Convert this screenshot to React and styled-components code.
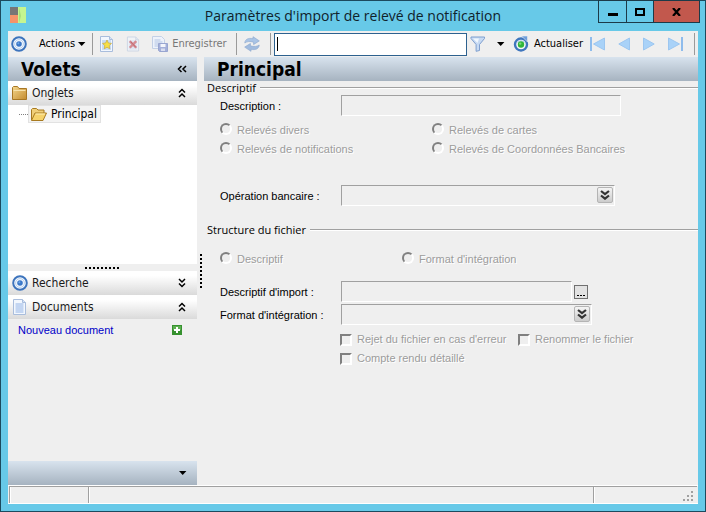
import React from "react";
import styled, { createGlobalStyle, css } from "styled-components";

const tahoma = `"DejaVu Sans Condensed", "DejaVu Sans", sans-serif`;
const segoe = `"Open Sans", "Noto Sans", sans-serif`;
const sans = `"Liberation Sans", Arial, sans-serif`;

const GlobalStyle = createGlobalStyle`
  *, *::before, *::after { box-sizing: border-box; }
  body { margin: 0; background: #67c9e8; }
  button, input, select { font: inherit; color: inherit; margin: 0; padding: 0; border-radius: 0; }
  button { background: none; border: 0; }
  svg { display: block; flex: none; }
`;

const Window = styled.div`
  min-height: 100vh;
  display: flex;
  flex-direction: column;
  padding: 0 7px 7px;
  border: 1px solid #1c4a5e;
  background: #67c9e8;
  font-family: ${sans};
  font-size: 11px;
  color: #000;
`;

const TitleBar = styled.header`
  position: relative;
  flex: none;
  height: 30px;
`;

const Logo = styled.svg`
  position: absolute;
  left: 2px;
  top: 6px;
`;

const Title = styled.h1`
  margin: 0;
  font: 400 14px/30px ${segoe};
  text-align: center;
  color: #10222b;
`;

const WindowButtons = styled.div`
  position: absolute;
  top: -1px;
  right: -2px;
  display: flex;
  border: 1px solid #1c3a48;
`;

const WindowButton = styled.button`
  width: ${(p) => p.$width}px;
  height: 21px;
  display: flex;
  align-items: center;
  justify-content: center;
  background: ${(p) => (p.$close ? "#c2584d" : "transparent")};
  & + & { border-left: 1px solid #1c3a48; }
`;

const Toolbar = styled.div`
  flex: none;
  height: 26px;
  display: flex;
  align-items: center;
  background: #efefef;
  font: 11px/16px ${tahoma};
`;

const ToolButton = styled.button`
  height: 24px;
  flex: none;
  display: flex;
  align-items: center;
  gap: ${(p) => p.$gap || 4}px;
  padding: 0 ${(p) => p.$pad ?? 4}px;
  color: ${(p) => (p.disabled ? "#777" : "#000")};
  white-space: nowrap;
`;

const Separator = styled.span`
  flex: none;
  width: 1px;
  height: 22px;
  margin: 0 ${(p) => p.$after ?? 4}px 0 ${(p) => p.$before ?? 4}px;
  background: #9a9a9a;
`;

const Search = styled.div`
  position: relative;
  flex: 1 1 195px;
  min-width: 80px;
  height: 23px;
  &::after {
    content: "";
    position: absolute;
    left: 3px;
    top: 4px;
    width: 1px;
    height: 14px;
    background: #000;
  }
`;

const SearchInput = styled.input`
  display: block;
  width: 100%;
  height: 100%;
  padding: 0 4px;
  border: 1px solid #2d618f;
  background: #fff;
  outline: none;
`;

const Body = styled.div`
  flex: 1;
  display: flex;
  background: #efefef;
`;

const Sidebar = styled.aside`
  flex: none;
  width: 189px;
  display: flex;
  flex-direction: column;
`;

const gradientBar = css`
  flex: none;
  height: 24px;
  background: linear-gradient(#d8e3ee, #a6b3c0);
`;

const Heading = styled.div`
  ${gradientBar}
  display: flex;
  align-items: center;
  justify-content: space-between;
  padding: 0 10px 0 13px;
`;

const HeadingText = styled.h2`
  margin: 0;
  font: 700 19px/24px ${tahoma};
`;

const Section = styled.button`
  flex: none;
  width: 100%;
  height: 24px;
  display: flex;
  align-items: center;
  gap: 4px;
  padding: 0 10px 0 4px;
  background: linear-gradient(#fff 20%, #dadada);
  font: 12px/22px ${tahoma};
  color: #1a1a1a;
`;

const SectionIcon = styled.span`
  width: 16px;
  flex: none;
`;

const SectionLabel = styled.span`
  flex: 1;
  text-align: left;
`;

const Tree = styled.div`
  height: 159px;
  padding-left: 11px;
  background: #fff;
`;

const TreeItem = styled.div`
  display: flex;
  align-items: center;
  &::before {
    content: "";
    width: 9px;
    border-top: 1px dotted #808080;
  }
`;

const TreeButton = styled.button`
  height: 18px;
  display: flex;
  align-items: center;
  gap: 4px;
  padding: 0 3px 0 2px;
  border: 1px solid #e2e2e2;
  background: #f3f3f3;
  font: 12px/16px ${tahoma};
`;

const HorizontalGrip = styled.div`
  height: 7px;
  display: flex;
  align-items: center;
  justify-content: center;
  &::before {
    content: "";
    width: 35px;
    height: 2px;
    background: repeating-linear-gradient(90deg, #000 0 2px, transparent 2px 4px);
  }
`;

const VerticalGrip = styled.div`
  flex: none;
  width: 7px;
  display: flex;
  align-items: center;
  justify-content: center;
  &::before {
    content: "";
    width: 2px;
    height: 34px;
    background: repeating-linear-gradient(#000 0 2px, transparent 2px 4px);
  }
`;

const DocumentRow = styled.div`
  flex: 1;
  display: flex;
  align-items: flex-start;
  justify-content: space-between;
  padding: 4px 15px 0 10px;
  line-height: 15px;
`;

const DocumentLink = styled.a`
  color: #0000c8;
  text-decoration: none;
`;

const AddButton = styled.button`
  margin-top: 2px;
`;

const SidebarFooter = styled.div`
  ${gradientBar}
  display: flex;
  align-items: center;
  justify-content: flex-end;
  padding-right: 10px;
`;

const Main = styled.main`
  flex: 1;
  min-width: 0;
`;

const Group = styled.fieldset`
  margin: 0;
  padding: 0;
  border: 0;
  min-width: 0;
`;

const GroupLegend = styled.legend`
  width: 100%;
  display: flex;
  align-items: center;
  gap: 4px;
  padding: 0 0 0 3px;
  font: 11px/14px ${segoe};
  &::after {
    content: "";
    flex: 1;
    height: 2px;
    background: #a0a0a0;
    border-bottom: 1px solid #fff;
  }
`;

const Field = styled.div`
  display: grid;
  grid-template-columns: 121px minmax(0, 1fr);
  align-items: center;
  padding-left: 16px;
  margin-top: ${(p) => p.$top || 0}px;
`;

const FieldLabel = styled.label`
  white-space: nowrap;
`;

const FieldControl = styled.div`
  display: flex;
  align-items: center;
  gap: 2px;
`;

const sunken = css`
  height: 21px;
  border: 1px solid;
  border-color: #a0a0a0 #fff #fff #a0a0a0;
  background: #efefef;
`;

const TextInput = styled.input`
  ${sunken}
  width: ${(p) => p.$width}px;
  max-width: 100%;
`;

const Combo = styled.div`
  position: relative;
  width: ${(p) => p.$width}px;
  max-width: 100%;
`;

const ComboSelect = styled.select`
  ${sunken}
  display: block;
  width: 100%;
  appearance: none;
  opacity: 1;
`;

const ComboArrow = styled.span`
  position: absolute;
  right: 2px;
  top: 2px;
  width: 16px;
  height: 16px;
  display: flex;
  align-items: center;
  justify-content: center;
  border: 1px solid #b4b4b4;
  border-radius: 2px;
  background: linear-gradient(#f4f4f4, #cccccc);
`;

const BrowseButton = styled.button`
  width: 14px;
  height: 14px;
  display: flex;
  align-items: flex-end;
  justify-content: center;
  padding-bottom: 2px;
  border: 1px solid #707070;
  background: #e2e2e2;
`;

const OptionGrid = styled.div`
  display: grid;
  grid-template-columns: ${(p) => p.$first}px minmax(0, 1fr);
  row-gap: 4px;
  margin-top: ${(p) => p.$top}px;
  padding-left: ${(p) => p.$indent}px;
`;

const Option = styled.label`
  display: flex;
  align-items: center;
  gap: 5px;
  line-height: 15px;
  white-space: nowrap;
  color: #9c9c9c;
  text-shadow: 1px 1px #fff;
`;

const Radio = styled.input`
  appearance: none;
  width: 12px;
  height: 12px;
  border: 2px solid;
  border-color: #808080 #fff #fff #808080;
  border-radius: 50%;
  background: #efefef;
  margin-bottom: 3px;
`;

const Checkbox = styled.input`
  appearance: none;
  width: 12px;
  height: 12px;
  border: 2px solid;
  border-color: #808080 #fff #fff #808080;
  background: #efefef;
`;

const StatusBar = styled.footer`
  flex: none;
  height: 19px;
  display: flex;
  padding: 0 1px;
  border-top: 1px solid #fff;
  border-bottom: 1px solid #fff;
  background: #efefef;
`;

const StatusCell = styled.div`
  width: ${(p) => p.$width || 0}px;
  flex: ${(p) => (p.$grow ? 1 : "none")};
  display: flex;
  align-items: flex-end;
  justify-content: flex-end;
  padding: 0 3px 1px 0;
  border-top: 1px solid #a0a0a0;
  border-left: 1px solid #a0a0a0;
  box-shadow: inset 1px 0 #fff;
`;

const TargetIcon = () => (
  <svg width="16" height="16" viewBox="0 0 16 16">
    <circle cx="8" cy="8" r="6.8" fill="#f4f8fd" stroke="#3d74bd" strokeWidth="2" />
    <circle cx="8" cy="8" r="4.4" fill="none" stroke="#b9d3f0" />
    <circle cx="8" cy="8" r="2.8" fill="#3b78c8" />
    <circle cx="7.4" cy="7.3" r="1" fill="#6ca5e6" />
  </svg>
);

const CaretIcon = () => (
  <svg width="8" height="4" viewBox="0 0 8 4"><path d="M0 0h7.4L3.7 4z" fill="#000" /></svg>
);

const ChevronIcon = ({ dir = "down", bold = false }) => {
  const turn = { down: 0, up: 180, left: 90 }[dir];
  return (
    <svg width="10" height="10" viewBox="0 0 10 10">
      <path
        transform={`rotate(${turn} 5 5)`}
        d={bold ? "M1 1L5 4.200L9 1M1 5.500L5 8.700L9 5.500" : "M2 1L5 4L8 1M2 5.500L5 8.500L8 5.500"}
        fill="none"
        stroke={bold ? "#333" : "#000"}
        strokeWidth={bold ? 2.2 : 1.5}
      />
    </svg>
  );
};

const PagePath = () => (
  <>
    <path d="M1.5.5h9l3 3v12h-12z" fill="#f2f7fe" stroke="#a9bddc" />
    <path d="M10.5.5v3h3" fill="#d5e3f6" stroke="#a9bddc" />
  </>
);

const NewIcon = () => (
  <svg width="15" height="16" viewBox="0 0 15 16">
    <PagePath />
    <path d="M3 14V4h9v10z" fill="#c9ddf5" />
    <path d="M8 4l1.4 3 3.1.4-2.3 2.2.6 3.2L8 11.300l-2.800 1.500.6-3.200-2.300-2.200L6.600 7z" fill="#f6df45" stroke="#c8a83c" strokeWidth=".7" />
  </svg>
);

const DeleteIcon = () => (
  <svg width="14" height="16" viewBox="0 0 15 16">
    <g opacity=".5"><PagePath /></g>
    <path d="M3 14V4h9v10z" fill="#dfe5f2" />
    <path d="M4 5l7 7M11 5l-7 7" stroke="#d58b92" strokeWidth="2.600" />
    <path d="M5 5.500l5.500 6" stroke="#bc6570" />
  </svg>
);

const SaveIcon = () => (
  <svg width="16" height="16" viewBox="0 0 16 16">
    <path d="M.5.5h9l3 3v9H.5z" fill="#edf2fb" stroke="#c3d0e6" />
    <path d="M2.500 4h6M2.500 6h8M2.500 8h5M2.500 10h4" stroke="#b3c5e4" />
    <path d="M6.500 7.500h9v8h-8l-1-1z" fill="#a4b0da" stroke="#98a5d0" />
    <path d="M8.500 8h5v3h-5z" fill="#f3f5fb" />
    <path d="M9 12.500h4V15H9z" fill="#d9def0" />
  </svg>
);

const SyncIcon = () => (
  <svg width="16" height="16" viewBox="0 0 16 16" stroke="#8faad0" strokeWidth=".7">
    <path d="M.8 7C1 3.400 4.200 1.600 9 2.700V.7l6.300 4.200L9.600 8.500V6.200C6.200 5.100 3 5.300.8 7z" fill="#a9c4e6" />
    <path d="M15.200 9c-.2 3.600-3.400 5.400-8.200 4.300v2L.7 11.100l5.700-3.600v2.300c3.400 1.100 6.600.9 8.800-.8z" fill="#a0bbdf" />
  </svg>
);

const FunnelIcon = () => (
  <svg width="16" height="16" viewBox="0 0 16 16">
    <path d="M1 1h13.500v1.500L9.500 8.500v6l-3.400.8V8.500L1 2.500z" fill="#c7daf3" stroke="#7f9fcf" />
    <path d="M3 2.500h6L7.500 7z" fill="#f1f7fe" />
  </svg>
);

const RefreshIcon = () => (
  <svg width="16" height="16" viewBox="0 0 16 16">
    <circle cx="8" cy="8.500" r="6" fill="#f4f9f5" stroke="#3f76bd" strokeWidth="2.400" />
    <path d="M4.500 6.500a4.500 4.500 0 0 1 7 0" fill="none" stroke="#a9c8ee" />
    <path d="M8.500 0h6v6z" fill="#6f9fdc" stroke="#efefef" strokeWidth=".6" />
    <circle cx="8" cy="8.500" r="3.200" fill="#31b53a" />
    <circle cx="7.200" cy="7.600" r="1.200" fill="#7bdc79" />
  </svg>
);

const NavIcon = ({ back, bar }) => (
  <svg width={bar ? 15 : 12} height="14" viewBox={bar ? "0 0 15 14" : "0 0 12 14"}>
    <g transform={back ? undefined : `translate(${bar ? 15 : 12} 0) scale(-1 1)`}>
      {bar && <path d="M0 0h2v14H0z" fill="#8fbcec" />}
      <path d={bar ? "M14.500 1v12L3.500 7z" : "M11.500 1v12L.8 7z"} fill="#a9d2f8" stroke="#9cc6f0" />
    </g>
  </svg>
);

const FolderIcon = () => (
  <svg width="15" height="14" viewBox="0 0 15 14">
    <defs>
      <linearGradient id="folder" x2="1" y2="1"><stop stopColor="#f4d78e" /><stop offset="1" stopColor="#c48b2e" /></linearGradient>
    </defs>
    <path d="M.5 13.500V1.500l1-1h4l1.500 2h7.500v11z" fill="url(#folder)" stroke="#a87724" />
    <path d="M1.500 4.500h12" stroke="#f7e2ab" />
  </svg>
);

const OpenFolderIcon = () => (
  <svg width="16" height="13" viewBox="0 0 16 13">
    <path d="M.5 12V1.500l1-1h4l1.500 1.500h6v3" fill="#f0cf79" stroke="#a87a20" />
    <path d="M.5 12.500L4 5h11.500L12 12.500z" fill="#f6d36c" stroke="#a87a20" />
    <path d="M4.600 6h9.400" stroke="#fff0b8" />
  </svg>
);

const DocumentIcon = () => (
  <svg width="15" height="16" viewBox="0 0 15 16">
    <PagePath />
    <path d="M3.500 5h8M3.500 7h8M3.500 9h8M3.500 11h8M3.500 13h8" stroke="#94b4e6" />
  </svg>
);

const AddIcon = () => (
  <svg width="10" height="10" viewBox="0 0 10 10">
    <path d="M0 0h10v10H0z" fill="#36912f" />
    <path d="M1 1h8v4H1z" fill="#5caf50" />
    <path d="M4 2h2v2h2v2H6v2H4V6H2V4h2z" fill="#fff" />
  </svg>
);

const EllipsisIcon = () => (
  <svg width="8" height="1" viewBox="0 0 8 1"><path d="M0 0h2v1H0zM3 0h2v1H3zM6 0h2v1H6z" fill="#000" /></svg>
);

const SizeGrip = () => (
  <svg width="11" height="11" viewBox="0 0 11 11">
    <path d="M8 0h2v2H8zM4 4h2v2H4zM8 4h2v2H8zM0 8h2v2H0zM4 8h2v2H4zM8 8h2v2H8z" fill="#a0a0a0" />
  </svg>
);

const RadioOption = ({ name, children }) => (
  <Option><Radio type="radio" name={name} disabled />{children}</Option>
);

const CheckOption = ({ children }) => (
  <Option><Checkbox type="checkbox" disabled />{children}</Option>
);

const ComboBox = ({ id, width }) => (
  <Combo $width={width}>
    <ComboSelect id={id} disabled />
    <ComboArrow><ChevronIcon bold /></ComboArrow>
  </Combo>
);

const SidebarSection = ({ icon, label, dir }) => (
  <Section>
    <SectionIcon>{icon}</SectionIcon>
    <SectionLabel>{label}</SectionLabel>
    <ChevronIcon dir={dir} />
  </Section>
);

const AppToolbar = () => (
  <Toolbar role="toolbar">
    <ToolButton $pad={3} aria-label="Menu"><TargetIcon /></ToolButton>
    <ToolButton $pad={9} $gap={3}>Actions<CaretIcon /></ToolButton>
    <Separator $before={-3} $after={2} />
    <ToolButton aria-label="Nouveau"><NewIcon /></ToolButton>
    <ToolButton aria-label="Supprimer" disabled $pad={8}><DeleteIcon /></ToolButton>
    <ToolButton disabled>
      <SaveIcon />Enregistrer
    </ToolButton>
    <Separator $before={5} $after={2} />
    <ToolButton $pad={5} aria-label="Synchroniser"><SyncIcon /></ToolButton>
    <Separator $before={5} $after={3} />
    <Search><SearchInput type="text" aria-label="Rechercher" /></Search>
    <ToolButton $pad={3} aria-label="Filtrer"><FunnelIcon /></ToolButton>
    <ToolButton $pad={8} aria-label="Options de filtre"><CaretIcon /></ToolButton>
    <ToolButton $pad={0} $gap={5}><RefreshIcon />Actualiser</ToolButton>
    <ToolButton $pad={7} aria-label="Premier"><NavIcon back bar /></ToolButton>
    <ToolButton $pad={6} aria-label="Précédent"><NavIcon back /></ToolButton>
    <ToolButton $pad={7} aria-label="Suivant"><NavIcon /></ToolButton>
    <ToolButton $pad={6} aria-label="Dernier"><NavIcon bar /></ToolButton>
    <Separator $before={5} $after={3} />
  </Toolbar>
);

const SidePanel = () => (
  <Sidebar>
    <Heading>
      <HeadingText>Volets</HeadingText>
      <button aria-label="Réduire"><ChevronIcon dir="left" /></button>
    </Heading>
    <SidebarSection icon={<FolderIcon />} label="Onglets" dir="up" />
    <Tree>
      <TreeItem><TreeButton><OpenFolderIcon />Principal</TreeButton></TreeItem>
    </Tree>
    <HorizontalGrip />
    <SidebarSection icon={<TargetIcon />} label="Recherche" dir="down" />
    <SidebarSection icon={<DocumentIcon />} label="Documents" dir="up" />
    <DocumentRow>
      <DocumentLink href="#nouveau">Nouveau document</DocumentLink>
      <AddButton aria-label="Ajouter"><AddIcon /></AddButton>
    </DocumentRow>
    <SidebarFooter><button aria-label="Plus"><CaretIcon /></button></SidebarFooter>
  </Sidebar>
);

const DescriptionGroup = () => (
  <Group>
    <GroupLegend>Descriptif</GroupLegend>
    <Field>
      <FieldLabel htmlFor="description">Description :</FieldLabel>
      <TextInput id="description" $width={280} disabled />
    </Field>
    <OptionGrid $first={212} $top={7} $indent={16}>
      <RadioOption name="type">Relevés divers</RadioOption>
      <RadioOption name="type">Relevés de cartes</RadioOption>
      <RadioOption name="type">Relevés de notifications</RadioOption>
      <RadioOption name="type">Relevés de Coordonnées Bancaires</RadioOption>
    </OptionGrid>
    <Field $top={28}>
      <FieldLabel htmlFor="operation">Opération bancaire :</FieldLabel>
      <ComboBox id="operation" width={274} />
    </Field>
  </Group>
);

const StructureGroup = styled(Group)`
  margin-top: 17px;
`;

const FileGroup = () => (
  <StructureGroup>
    <GroupLegend>Structure du fichier</GroupLegend>
    <OptionGrid $first={182} $top={15} $indent={16}>
      <RadioOption name="structure">Descriptif</RadioOption>
      <RadioOption name="structure">Format d'intégration</RadioOption>
    </OptionGrid>
    <Field $top={14}>
      <FieldLabel htmlFor="import">Descriptif d'import :</FieldLabel>
      <FieldControl>
        <TextInput id="import" $width={231} disabled />
        <BrowseButton aria-label="Parcourir"><EllipsisIcon /></BrowseButton>
      </FieldControl>
    </Field>
    <Field $top={2}>
      <FieldLabel htmlFor="format">Format d'intégration :</FieldLabel>
      <ComboBox id="format" width={251} />
    </Field>
    <OptionGrid $first={178} $top={7} $indent={136}>
      <CheckOption>Rejet du fichier en cas d'erreur</CheckOption>
      <CheckOption>Renommer le fichier</CheckOption>
      <CheckOption>Compte rendu détaillé</CheckOption>
    </OptionGrid>
  </StructureGroup>
);

export default function App() {
  return (
    <>
      <GlobalStyle />
      <Window>
        <TitleBar>
          <Logo width="16" height="16" viewBox="0 0 16 16">
            <path d="M0 0h8v8H0z" fill="#777575" />
            <path d="M0 8h8v8H0z" fill="#f5936a" />
            <path d="M8 0h8v16H8z" fill="#c5f590" />
            <path d="M9 0l2 9-2 7z" fill="#a9dd7c" />
          </Logo>
          <Title>Paramètres d'import de relevé de notification</Title>
          <WindowButtons>
            <WindowButton $width={27} aria-label="Réduire">
              <svg width="10" height="10" viewBox="0 0 10 10"><path d="M0 6h10v3H0z" /></svg>
            </WindowButton>
            <WindowButton $width={27} aria-label="Agrandir">
              <svg width="10" height="8" viewBox="0 0 10 8"><path d="M1 1h8v6H1z" fill="none" stroke="#000" strokeWidth="2" /></svg>
            </WindowButton>
            <WindowButton $width={46} $close aria-label="Fermer">
              <svg width="9" height="8" viewBox="0 0 9 8"><path d="M1 0l7 8M8 0L1 8" stroke="#000" strokeWidth="2.200" /></svg>
            </WindowButton>
          </WindowButtons>
        </TitleBar>
        <AppToolbar />
        <Body>
          <SidePanel />
          <VerticalGrip />
          <Main>
            <Heading><HeadingText>Principal</HeadingText></Heading>
            <DescriptionGroup />
            <FileGroup />
          </Main>
        </Body>
        <StatusBar>
          <StatusCell $width={79} />
          <StatusCell $grow />
          <StatusCell $width={104}><SizeGrip /></StatusCell>
        </StatusBar>
      </Window>
    </>
  );
}
